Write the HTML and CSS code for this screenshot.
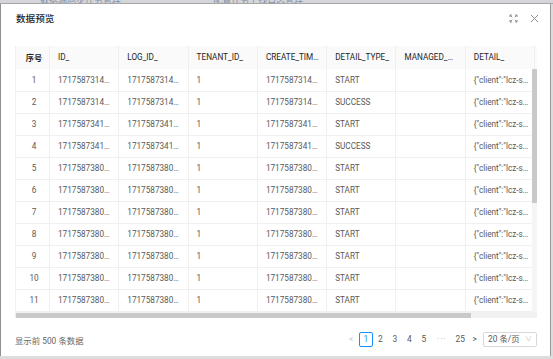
FILE: index.html
```html
<!DOCTYPE html>
<html lang="zh-CN">
<head>
  <meta charset="UTF-8">
  <meta name="viewport" content="width=device-width, initial-scale=1.0">
  <title>数据预览</title>
  <link rel="stylesheet" href="styles.css">
</head>
<body>

  <div class="page-strip">
    <span class="tab">数据源同步任务管理</span>
    <span class="tab">配置任务上线日志管理</span>
  </div>

  <div class="modal">
    <div class="modal-header">
      <div class="modal-title">数据预览</div>
      <div class="modal-tools">
        <svg class="tool" width="9" height="9" viewBox="0 0 9 9">
          <path d="M1 1l2.2 2.2M1 3V1h2M8 1L5.8 3.2M8 3V1H6M1 8l2.2-2.2M1 6v2h2M8 8L5.8 5.8M8 6v2H6" />
        </svg>
        <svg class="tool" width="9" height="9" viewBox="0 0 9 9">
          <path d="M1 1l7 7M8 1L1 8" />
        </svg>
      </div>
    </div>

    <div class="modal-body">
      <div class="table">
        <div class="table-head">
          <table>
            <colgroup>
              <col class="c-index"><col class="c-mid"><col class="c-mid"><col class="c-mid">
              <col class="c-mid"><col class="c-mid"><col class="c-mid"><col class="c-mid"><col class="c-wide">
            </colgroup>
            <thead>
              <tr>
                <th class="center">序号</th>
                <th>ID_</th>
                <th>LOG_ID_</th>
                <th>TENANT_ID_</th>
                <th>CREATE_TIMESTAMP_</th>
                <th>DETAIL_TYPE_</th>
                <th>MANAGED_MODE_</th>
                <th>DETAIL_</th>
                <th>REMARK_</th>
              </tr>
            </thead>
          </table>
        </div>
        <div class="table-body">
          <div class="viewport">
            <table>
              <colgroup>
                <col class="c-index"><col class="c-mid"><col class="c-mid"><col class="c-mid">
                <col class="c-mid"><col class="c-mid"><col class="c-mid"><col class="c-mid"><col class="c-wide">
              </colgroup>
              <tbody id="rows"></tbody>
            </table>
          </div>
          <div class="vbar"><div class="thumb"></div></div>
          <div class="hbar"><div class="thumb"></div></div>
          <div class="corner"></div>
        </div>
      </div>

      <div class="modal-footer">
        <div class="summary">显示前 500 条数据</div>
        <div class="pager">
          <span class="page-item disabled">&lt;</span>
          <span class="page-item active">1</span>
          <span class="page-item">2</span>
          <span class="page-item">3</span>
          <span class="page-item">4</span>
          <span class="page-item">5</span>
          <span class="page-item more">•••</span>
          <span class="page-item">25</span>
          <span class="page-item">&gt;</span>
          <span class="page-size">20 条/页 <span class="arrow">∨</span></span>
        </div>
      </div>
    </div>
  </div>

  <script>
    var stamps = ["1717587314562", "1717587314588", "1717587341203", "1717587341260"];
    var types = ["START", "SUCCESS", "START", "SUCCESS"];
    var body = document.getElementById("rows");

    for (var i = 0; i < 20; i++) {
      var stamp = stamps[i] || String(1717587380114 + i * 7);
      var type = types[i] || "START";
      var tr = document.createElement("tr");
      tr.innerHTML =
        '<td class="center">' + (i + 1) + '</td>' +
        '<td>' + stamp + '000' + (i + 1) + '</td>' +
        '<td>' + stamp + '100' + (i + 1) + '</td>' +
        '<td>1</td>' +
        '<td>' + stamp + '</td>' +
        '<td>' + type + '</td>' +
        '<td></td>' +
        '<td>{"client":"lcz-sync-' + (i + 1) + '","status":"' + type + '"}</td>' +
        '<td></td>';
      body.appendChild(tr);
    }
  </script>

</body>
</html>
```

FILE: styles.css
```css
* {
  box-sizing: border-box;
}

body {
  margin: 0;
  background: #dcdcdc;
  font-family: Roboto, "Noto Sans CJK SC", sans-serif;
  color: #595959;
}

.page-strip {
  height: 4px;
  overflow: hidden;
  background: #d4d6da;
  border-bottom: 1px solid #a6a6a6;
  font-size: 9px;
  line-height: 1px;
  color: #8590a8;
  padding-left: 40px;
}

.page-strip .tab {
  margin-right: 90px;
}

.modal {
  width: 549px;
  height: 352px;
  margin-left: 1px;
  background: #fff;
  box-shadow: -1px 0 0 #8f8f8f, 0 1px 0 #9a9a9a, 1px 0 0 #9a9a9a;
  display: flex;
  flex-direction: column;
}

.modal-header {
  height: 28px;
  padding: 0 11px 0 15px;
  display: flex;
  align-items: center;
  justify-content: space-between;
}

.modal-title {
  font-size: 9.6px;
  font-weight: 500;
  color: #262626;
}

.modal-tools {
  display: flex;
  gap: 12px;
}

.tool {
  fill: none;
  stroke: #8c8c8c;
  stroke-width: 1;
}

.modal-body {
  padding: 14px 13px 0 14px;
}

.table {
  border-left: 1px solid #f0f0f0;
}

table {
  width: 598.6px;
  border-collapse: collapse;
  table-layout: fixed;
}

.c-index { width: 33.5px; }
.c-mid { width: 69.3px; }
.c-wide { width: 80px; }

.table-head {
  height: 23px;
  overflow: hidden;
  background: #fafafa;
}

.table-body {
  display: grid;
  grid-template-columns: 1fr 5px;
  grid-template-rows: 243px 6px;
}

.viewport {
  overflow: hidden;
}

.vbar {
  background: #f5f5f5;
}

.vbar .thumb {
  height: 134px;
  background: #c9c9c9;
}

.hbar {
  background: #f1f1f1;
  padding-top: 1px;
}

.hbar .thumb {
  width: 455px;
  height: 5px;
  background: #c9c9c9;
}

.corner {
  background: #f1f1f1;
}

th, td {
  height: 22px;
  padding: 0 5px 0 8px;
  font-size: 8.2px;
  font-weight: normal;
  text-align: left;
  white-space: nowrap;
  overflow: hidden;
  text-overflow: ellipsis;
  border-right: 1px solid #f0f0f0;
  border-bottom: 1px solid #f0f0f0;
}

th {
  height: 23px;
  color: #262626;
}

th.center {
  font-weight: 700;
}

td {
  color: #595959;
}

.center {
  text-align: center;
}

.modal-footer {
  margin-top: 14px;
  height: 15px;
  display: flex;
  align-items: center;
  justify-content: space-between;
  font-size: 8.4px;
}

.summary {
  color: #666;
}

.pager {
  display: flex;
  align-items: center;
}

.page-item {
  width: 14.5px;
  height: 15px;
  line-height: 13px;
  text-align: center;
  border: 1px solid transparent;
  border-radius: 2px;
  color: #595959;
}

.page-item.active {
  border-color: #1890ff;
  color: #1890ff;
}

.page-item.disabled {
  color: #c8c8c8;
}

.page-item.more {
  width: 22px;
  color: #bfbfbf;
  font-size: 5px;
  letter-spacing: 1.5px;
}

.page-size {
  margin-left: 1px;
  width: 54px;
  height: 15px;
  line-height: 13px;
  padding: 0 4px;
  border: 1px solid #d9d9d9;
  border-radius: 2px;
  color: #595959;
  display: flex;
  justify-content: space-between;
}

.page-size .arrow {
  color: #bfbfbf;
  font-size: 7px;
}
```
